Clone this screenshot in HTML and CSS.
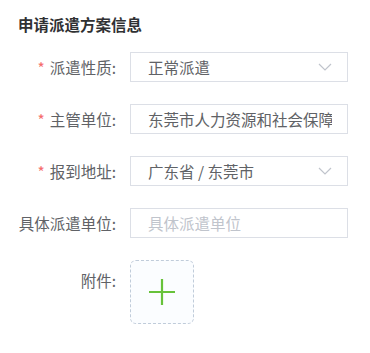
FILE: index.html
```html
<!DOCTYPE html>
<html lang="zh-CN">
<head>
    <meta charset="UTF-8">
    <meta name="viewport" content="width=device-width, initial-scale=1.0">
    <title>申请派遣方案信息</title>
    <link rel="stylesheet" href="styles.css">
</head>
<body>
    <div class="container">
        <h3 class="section-title">申请派遣方案信息</h3>
        <form class="apply-form">
            <div class="form-item">
                <label class="form-label"><span class="required">*</span>派遣性质:</label>
                <div class="form-control select">
                    <span class="value">正常派遣</span>
                    <svg class="arrow" width="14" height="8" viewBox="0 0 14 8"><path d="M1 1 L7 7 L13 1" fill="none" stroke="#c0c4cc" stroke-width="1.2"/></svg>
                </div>
            </div>
            <div class="form-item">
                <label class="form-label"><span class="required">*</span>主管单位:</label>
                <div class="form-control">
                    <span class="value">东莞市人力资源和社会保障局</span>
                </div>
            </div>
            <div class="form-item">
                <label class="form-label"><span class="required">*</span>报到地址:</label>
                <div class="form-control select">
                    <span class="value">广东省 / 东莞市</span>
                    <svg class="arrow" width="14" height="8" viewBox="0 0 14 8"><path d="M1 1 L7 7 L13 1" fill="none" stroke="#c0c4cc" stroke-width="1.2"/></svg>
                </div>
            </div>
            <div class="form-item">
                <label class="form-label">具体派遣单位:</label>
                <div class="form-control">
                    <span class="placeholder">具体派遣单位</span>
                </div>
            </div>
            <div class="form-item upload-item">
                <label class="form-label">附件:</label>
                <div class="upload-box">
                    <svg width="28" height="28" viewBox="0 0 28 28"><path d="M14 1 V27 M1 14 H27" stroke="#67c23a" stroke-width="2.2"/></svg>
                </div>
            </div>
        </form>
    </div>
</body>
</html>
```

FILE: styles.css
```css
body {
    margin: 0;
    background-color: #fff;
    font-family: "Noto Sans CJK SC", "Noto Sans", sans-serif;
}

.container {
    padding: 13px 0 0 18px;
    width: 330px;
}

.section-title {
    margin: 0 0 17px;
    font-size: 15.5px;
    line-height: 22px;
    font-weight: bold;
    color: #303133;
}

.form-item {
    display: flex;
    align-items: center;
    margin-bottom: 22px;
}

.form-label {
    width: 98px;
    padding-right: 14px;
    text-align: right;
    font-size: 15.5px;
    color: #606266;
    white-space: nowrap;
}

.required {
    color: #f56c6c;
    margin-right: 5px;
}

.form-control {
    box-sizing: border-box;
    width: 218px;
    height: 30px;
    border: 1px solid #dcdfe6;
    padding: 0 15px 0 17px;
    display: flex;
    align-items: center;
    font-size: 15.5px;
    color: #606266;
    overflow: hidden;
}

.form-control .value {
    flex: 1;
    white-space: nowrap;
    overflow: hidden;
}

.placeholder {
    color: #c0c4cc;
}

.arrow {
    margin-left: 8px;
    flex-shrink: 0;
}

.upload-item {
    align-items: flex-start;
}

.upload-item .form-label {
    line-height: 40px;
}

.upload-box {
    box-sizing: border-box;
    width: 64px;
    height: 64px;
    border: 1px dashed #c0ccda;
    border-radius: 6px;
    background-color: #fbfdff;
    display: flex;
    align-items: center;
    justify-content: center;
}
```
